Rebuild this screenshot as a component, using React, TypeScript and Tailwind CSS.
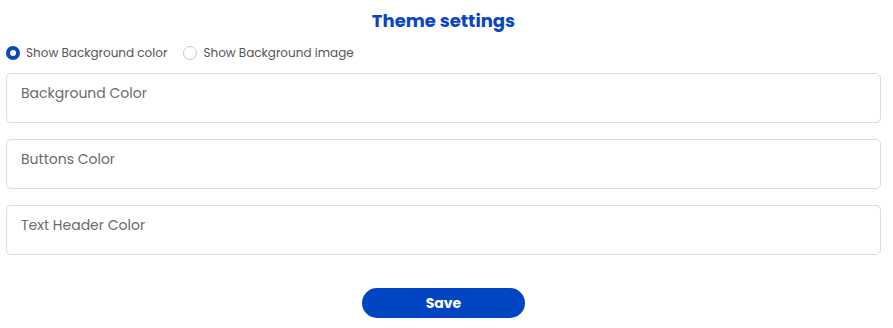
import { useState } from "react";

const fields = ["Background Color", "Buttons Color", "Text Header Color"];

export default function App() {
  const [mode, setMode] = useState<"color" | "image">("color");

  return (
    <div className="w-[887px] h-[328px] bg-white px-[6px] pt-[9px] font-['Poppins','Open_Sans',sans-serif] overflow-hidden">
      <h2 className="text-center text-[18px] leading-[24px] font-bold text-[#0a45c2]">Theme settings</h2>

      <div className="flex items-center gap-[16px] mt-[9px] h-[22px]">
        <label className="flex items-center gap-[6px] cursor-pointer" onClick={() => setMode("color")}>
          <span
            className={
              mode === "color"
                ? "w-[14px] h-[14px] rounded-full border-[4px] border-[#0a45c2] bg-white"
                : "w-[14px] h-[14px] rounded-full border border-[#c8c8c8] bg-white"
            }
          />
          <span className="text-[12px] text-[#555555]">Show Background color</span>
        </label>
        <label className="flex items-center gap-[6px] cursor-pointer" onClick={() => setMode("image")}>
          <span
            className={
              mode === "image"
                ? "w-[14px] h-[14px] rounded-full border-[4px] border-[#0a45c2] bg-white"
                : "w-[14px] h-[14px] rounded-full border border-[#c8c8c8] bg-white"
            }
          />
          <span className="text-[12px] text-[#555555]">Show Background image</span>
        </label>
      </div>

      <div className="flex flex-col gap-[16px] mt-[9px] w-[875px]">
        {fields.map((f) => (
          <div key={f} className="h-[50px] rounded-[5px] border border-[#dcdcdc] px-[14px] pt-[7px]">
            <span className="text-[14px] leading-[20px] text-[#6b6b6b]">{f}</span>
          </div>
        ))}
      </div>

      <div className="flex justify-center mt-[33px]">
        <button className="w-[163px] h-[30px] rounded-full bg-[#0046c2] text-white text-[14px] font-bold">
          Save
        </button>
      </div>
    </div>
  );
}
